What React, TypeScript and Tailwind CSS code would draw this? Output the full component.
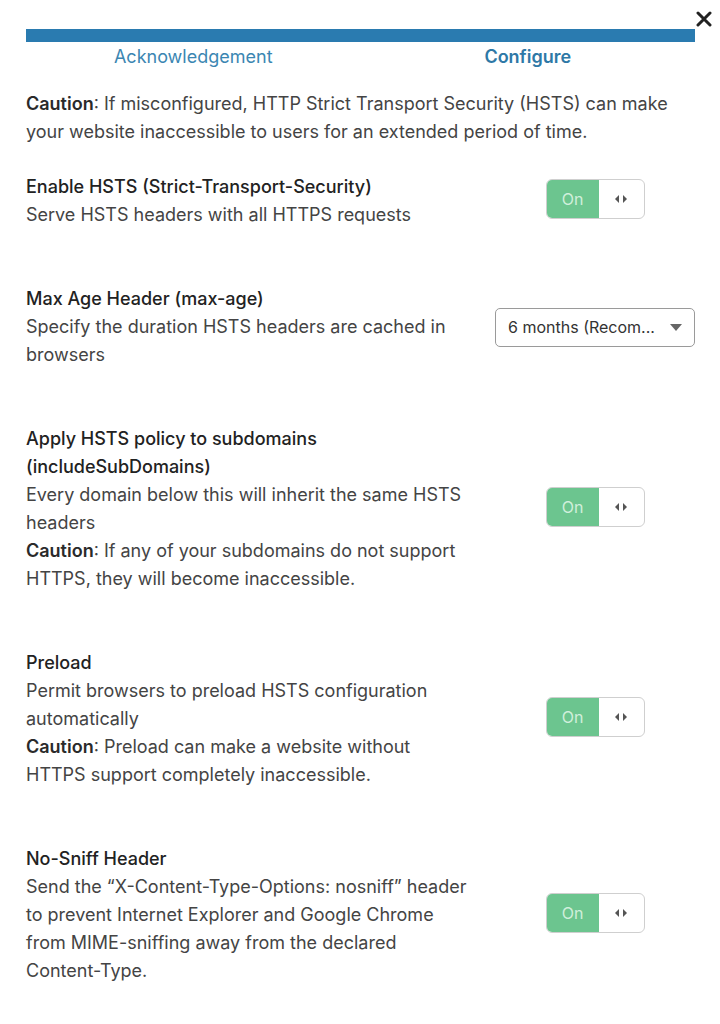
import React from "react";

function Toggle() {
  return (
    <div className="flex h-[40px] w-[99px] overflow-hidden rounded-[6px] border border-[#cfcfcf] bg-white">
      <div className="flex w-[52px] items-center justify-center bg-[#6cc58f] text-[16px] text-[#d0efdb]">On</div>
      <div className="flex flex-1 items-center justify-center">
        <svg width="14" height="10" viewBox="0 0 14 10">
          <path d="M5 1 L1 5 L5 9 Z" fill="#555" />
          <path d="M9 1 L13 5 L9 9 Z" fill="#555" />
        </svg>
      </div>
    </div>
  );
}

function Select() {
  return (
    <div className="flex h-[39px] w-[200px] items-center justify-between rounded-[5px] border border-[#9a9a9a] bg-white pl-[12px] pr-[12px] text-[16px] text-[#333]">
      <span>6 months (Recom...</span>
      <svg width="12" height="7" viewBox="0 0 12 7">
        <path d="M0 0 L12 0 L6 7 Z" fill="#666" />
      </svg>
    </div>
  );
}

function Section({ title, lines, control, lift = true }: { title: React.ReactNode; lines: React.ReactNode[]; control: React.ReactNode; lift?: boolean }) {
  return (
    <div className="flex items-center justify-between">
      <div className="w-[455px] text-[18px] leading-[28px] text-[#444]">
        <div className="font-medium text-[#222]">{title}</div>
        {lines.map((l, i) => (
          <div key={i}>{l}</div>
        ))}
      </div>
      <div className={`flex w-[200px] justify-center ${lift ? "mb-[5px]" : ""}`}>{control}</div>
    </div>
  );
}

const B = ({ children }: { children: React.ReactNode }) => <span className="font-semibold text-[#2a2a2a]">{children}</span>;

export default function App() {
  return (
    <div className="relative min-h-[1024px] w-[720px] bg-white" style={{ fontFamily: "Inter, 'Noto Sans', sans-serif" }}>
      <button className="absolute right-[8px] top-[11px] text-[#222]">
        <svg width="16" height="16" viewBox="0 0 16 16">
          <path d="M2 2 L14 14 M14 2 L2 14" stroke="#222" strokeWidth="3" strokeLinecap="round" />
        </svg>
      </button>
      <div className="px-[26px] pt-[29px] pr-[25px]">
        <div className="h-[13px] bg-[#2a7bb0]" />
        <div className="grid grid-cols-2 pt-[1px] text-[18px] leading-[28px]">
          <div className="text-center text-[#3b86b2]">Acknowledgement</div>
          <div className="text-center font-semibold text-[#2e78a6]">Configure</div>
        </div>

        <div className="mt-[19px] text-[18px] leading-[28px] text-[#444]">
          <div><B>Caution</B>: If misconfigured, HTTP Strict Transport Security (HSTS) can make</div>
          <div>your website inaccessible to users for an extended period of time.</div>
        </div>

        <div className="mt-[27px] flex flex-col gap-[56px]">
          <Section
            title="Enable HSTS (Strict-Transport-Security)"
            lines={["Serve HSTS headers with all HTTPS requests"]}
            control={<Toggle />}
          />
          <Section
            title="Max Age Header (max-age)"
            lines={["Specify the duration HSTS headers are cached in", "browsers"]}
            control={<Select />}
            lift={false}
          />
          <Section
            title={<><div>Apply HSTS policy to subdomains</div><div>(includeSubDomains)</div></>}
            lines={[
              "Every domain below this will inherit the same HSTS",
              "headers",
              <><B>Caution</B>: If any of your subdomains do not support</>,
              "HTTPS, they will become inaccessible.",
            ]}
            control={<Toggle />}
          />
          <Section
            title="Preload"
            lines={[
              "Permit browsers to preload HSTS configuration",
              "automatically",
              <><B>Caution</B>: Preload can make a website without</>,
              "HTTPS support completely inaccessible.",
            ]}
            control={<Toggle />}
          />
          <Section
            title="No-Sniff Header"
            lines={[
              "Send the \u201CX-Content-Type-Options: nosniff\u201D header",
              "to prevent Internet Explorer and Google Chrome",
              "from MIME-sniffing away from the declared",
              "Content-Type.",
            ]}
            control={<Toggle />}
          />
        </div>
      </div>
    </div>
  );
}
